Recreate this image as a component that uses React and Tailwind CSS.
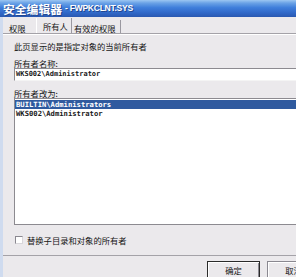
export default function App() {
  return (
    <div className="w-[296px] h-[277px] overflow-hidden bg-[#ebe9ec] flex flex-col font-['Noto_Sans_CJK_SC','Noto_Sans_CJK_JP',sans-serif] text-[#151515]">
      {/* title bar */}
      <div className="h-[17px] shrink-0 flex items-center pl-[3px] bg-[linear-gradient(to_bottom,#9cc6f2_0%,#6aa2e6_18%,#3f7edb_45%,#3068c8_75%,#2a58b0_100%)] text-white font-bold whitespace-nowrap">
        <span className="text-[11.8px] leading-[17px] [text-shadow:1px_1px_0_#22468e]">安全编辑器</span>
        <span className="font-['Liberation_Sans',sans-serif] text-[8.6px] leading-[17px] tracking-[-0.3px] ml-[3px] [text-shadow:1px_1px_0_#22468e]">- FWPKCLNT.SYS</span>
      </div>
      <div className="flex flex-1 min-h-0">
        <div className="w-[3px] shrink-0 bg-[#cfdbef]" />
        <div className="flex-1 min-w-0 flex flex-col">
          {/* tabs */}
          <div className="h-[16px] shrink-0 flex items-end text-[8.3px] leading-[10px] whitespace-nowrap">
            <div className="w-[33px] h-[13px] pl-[6px] pt-[3px]">权限</div>
            <div className="w-[36px] h-[15px] pl-[6px] pt-[3px] border-l border-white border-r border-r-[#9a98a0]">所有人</div>
            <div className="w-[49px] h-[13px] pl-[2px] pt-[3px] border-r border-[#9a98a0]">有效的权限</div>
          </div>
          {/* panel */}
          <div className="h-[223px] shrink-0 border-t border-b border-[#a4a2a8] shadow-[inset_0_1px_0_#ffffff] flex flex-col pl-[11px] w-[420px]">
            <div className="mt-[7px] h-[10px] text-[8.3px] leading-[10px] whitespace-nowrap">此页显示的是指定对象的当前所有者</div>
            <div className="mt-[7px] h-[10px] text-[8.3px] leading-[10px] whitespace-nowrap">所有者名称:</div>
            <div className="h-[13px] bg-white border border-[#8c8a90] border-b-[#f4f4f4] border-r-[#f4f4f4] pl-[1px] font-['DejaVu_Sans_Mono',monospace] text-[7px] leading-[11px] font-bold text-[#1a1a1a] whitespace-nowrap">
              WKS002\Administrator
            </div>
            <div className="mt-[7px] h-[10px] text-[8.3px] leading-[10px] whitespace-nowrap">所有者改为:</div>
            <div className="h-[127px] bg-white border border-[#8c8a90] pt-[1px] font-['DejaVu_Sans_Mono',monospace] text-[7.2px] leading-[9px] font-bold whitespace-nowrap">
              <div className="h-[9px] bg-[#2f5a9f] text-white pl-[1px]">BUILTIN\Administrators</div>
              <div className="h-[9px] text-[#1a1a1a] pl-[1px]">WKS002\Administrator</div>
            </div>
            <div className="mt-[10px] h-[10px] flex items-center text-[8.3px] leading-[10px] whitespace-nowrap">
              <div className="ml-[1px] w-[8px] h-[8px] bg-white border border-[#8a8890] border-b-[#d8d6da] border-r-[#d8d6da]" />
              <span className="ml-[4px]">替换子目录和对象的所有者</span>
            </div>
          </div>
          {/* buttons */}
          <div className="flex pl-[204px] pt-[5px] text-[8.3px] leading-[10px] whitespace-nowrap">
            <div className="w-[53px] h-[18px] shrink-0 border border-[#2a2a2a] bg-[#ebe9ec] shadow-[inset_1px_1px_0_#ffffff,inset_-1px_-1px_0_#8a8890] flex justify-center pt-[3px]">确定</div>
            <div className="ml-[7px] w-[53px] h-[18px] shrink-0 border border-[#8a8890] bg-[#ebe9ec] shadow-[inset_1px_1px_0_#ffffff] flex justify-center pt-[3px]">取消</div>
          </div>
        </div>
      </div>
    </div>
  );
}
